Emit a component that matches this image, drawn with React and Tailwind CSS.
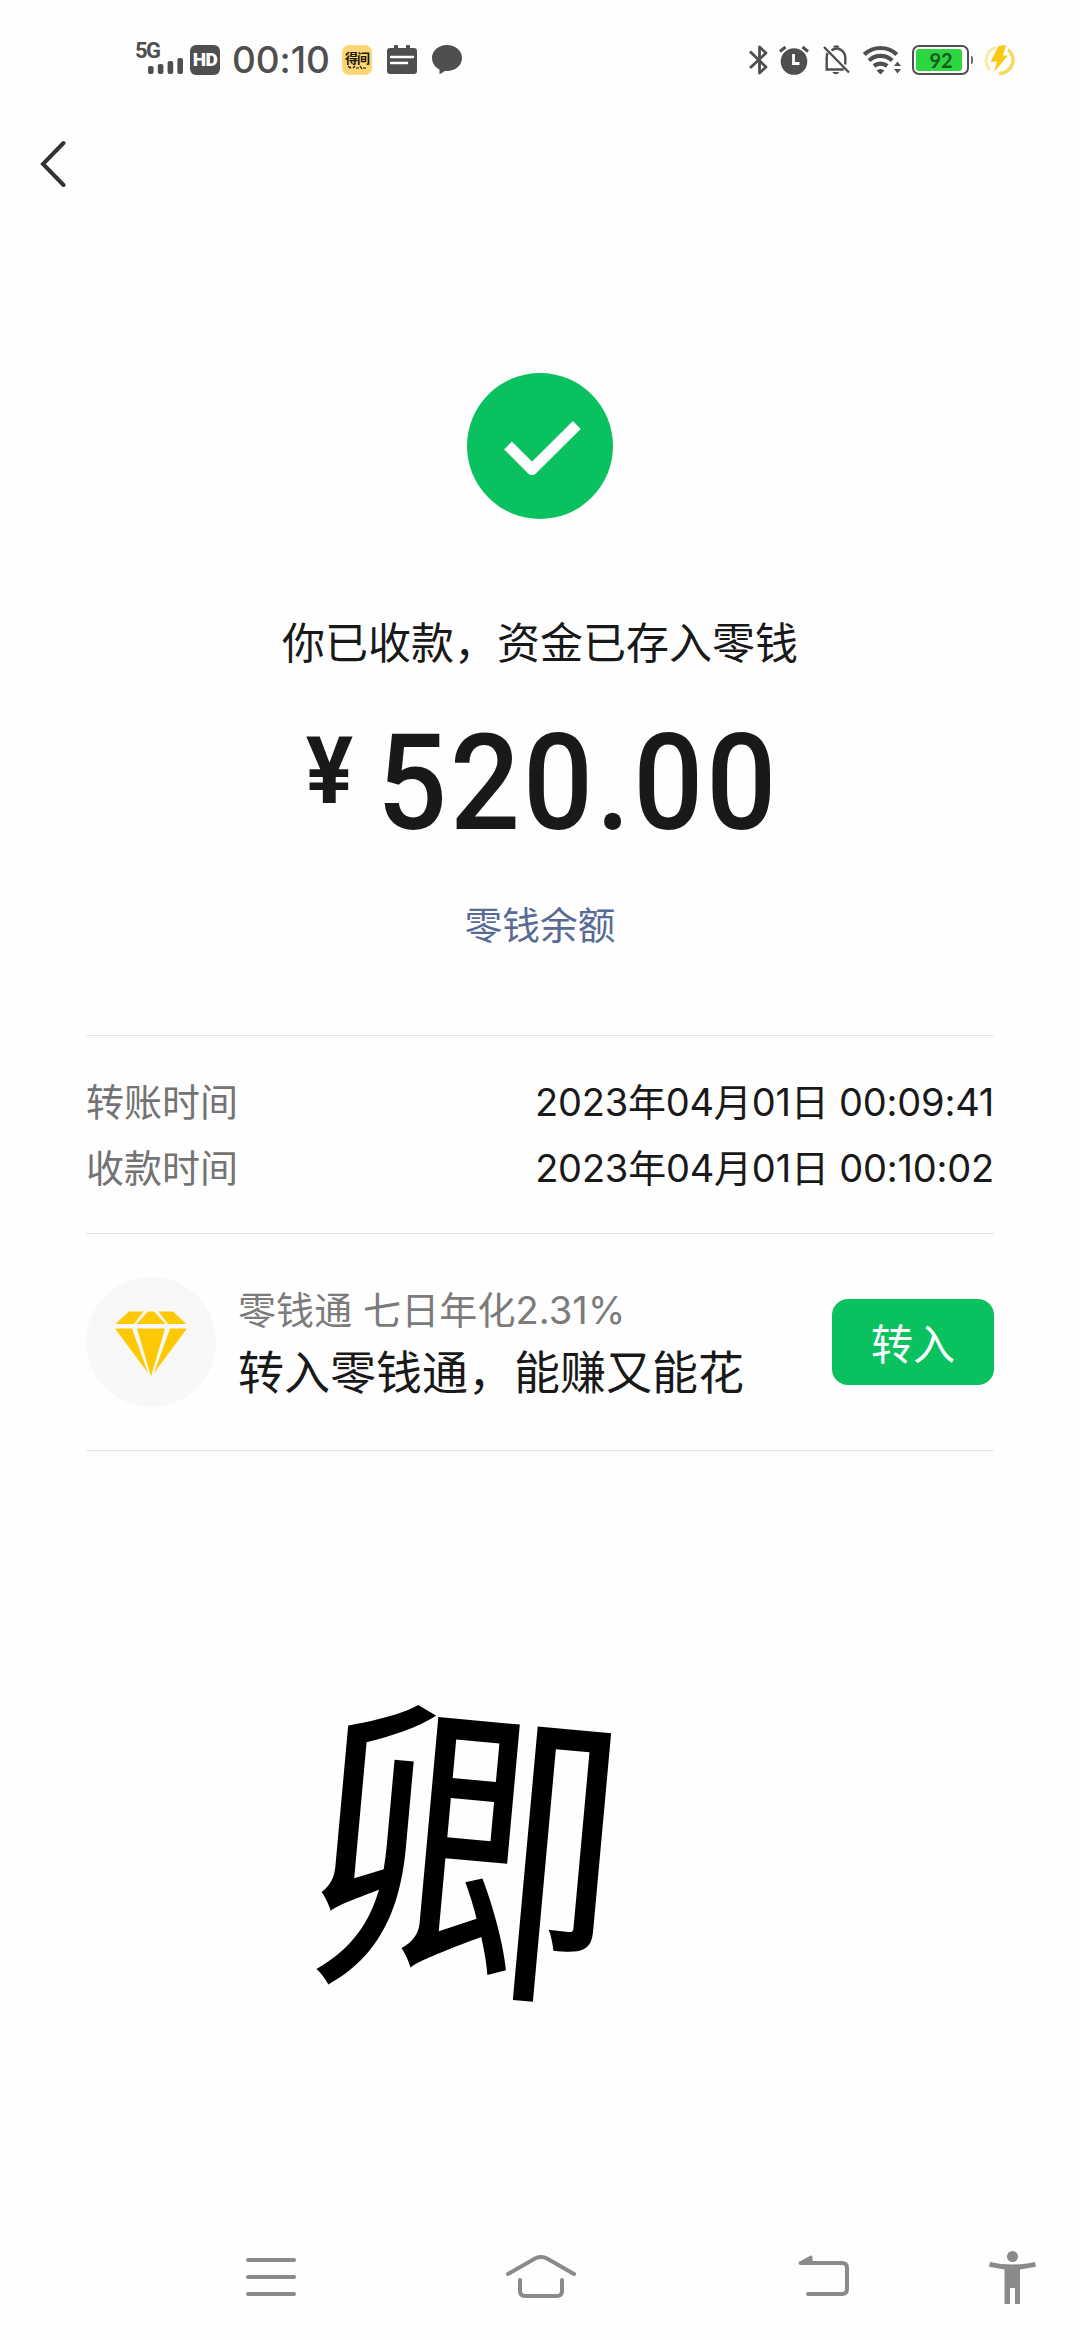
// src/App.jsx

const times = [
  { label: '转账时间', value: '2023年04月01日 00:09:41' },
  { label: '收款时间', value: '2023年04月01日 00:10:02' },
];

function StatusBar() {
  return (
    <header className="flex h-[120px] items-start justify-between pt-[43px] pl-[135px] pr-[65px] text-[#4f4f4f]">
      <div className="flex items-start">
        <div className="flex h-8 w-[49px] flex-col">
          <span className="font-['Roboto',sans-serif] text-[22px] leading-[15px] font-bold tracking-[-1.5px]">5G</span>
          <svg className="-mt-0.5 ml-[13px]" width="36" height="18" viewBox="0 0 36 18" fill="currentColor">
            <rect x="0" y="10" width="5.600" height="8" rx="2" />
            <rect x="9.800" y="8" width="5.600" height="10" rx="2" />
            <rect x="19.600" y="5" width="5.600" height="13" rx="2" />
            <rect x="29.400" y="2" width="5.600" height="16" rx="2" />
          </svg>
        </div>
        <div className="mt-0.5 ml-1.5 flex h-[30px] w-[30px] items-center justify-center rounded-[6px] bg-[#4f4f4f] font-['Roboto',sans-serif] text-[19px] font-black tracking-[-0.5px] text-white">
          <span>HD</span>
        </div>
        <span className="ml-3 w-[97px] font-['Inter',sans-serif] text-[37px] leading-[34px] font-[450] tracking-[-0.1px]">00:10</span>
        <div className="mt-0.5 ml-[13px] flex h-[30px] w-[30px] flex-col items-center rounded-[7px] bg-[#fbd576] pt-[5px] font-['Noto_Sans_CJK_SC',sans-serif] text-[#1b1508]">
          <span className="text-[13px] leading-[15px] font-bold tracking-[-1px]">得间</span>
          <svg width="19" height="5" viewBox="0 0 19 5" fill="none" stroke="currentColor" strokeWidth="1.2">
            <path d="M0 1l2 2 1-1M5 3l2-2M8 3h3M12 1l2 3M15 3h3" />
          </svg>
        </div>
        <svg className="mt-0.5 ml-[15px]" width="30" height="30" viewBox="0 0 30 30">
          <path d="M7 3V1.5a2 2 0 0 1 4 0V3h8V1.5a2 2 0 0 1 4 0V3h4a3 3 0 0 1 3 3v20a3 3 0 0 1-3 3H3a3 3 0 0 1-3-3V6a3 3 0 0 1 3-3z" fill="currentColor" />
          <path d="M4 12h22M4 18h16" stroke="#fff" strokeWidth="2.4" strokeLinecap="round" />
        </svg>
        <svg className="mt-0.5 ml-[15px]" width="30" height="30" viewBox="0 0 30 30">
          <path d="M15 0C6.500 0 0 5.600 0 13c0 5 3 9.200 7.500 11.400v4.800c2-1 3.600-1.900 5.200-3.200 9.800.8 17.300-5 17.300-13C30 5.600 23.500 0 15 0z" fill="currentColor" />
        </svg>
      </div>

      <div className="mt-0.5 flex items-start">
        <svg width="19" height="30" viewBox="0 0 19 30" fill="none" stroke="currentColor" strokeWidth="2.8" strokeLinejoin="round">
          <path d="M1 6.500L17 22l-6.500 6V2L17 8 1 23" />
        </svg>
        <svg className="ml-[11px]" width="30" height="30" viewBox="0 0 30 30">
          <circle cx="15" cy="16.500" r="13.300" fill="currentColor" />
          <path d="M1 6.500L6.500 2M29 6.500L23.500 2" stroke="currentColor" strokeWidth="3" />
          <path d="M14.500 9v9.500h6" fill="none" stroke="#fff" strokeWidth="2.8" />
        </svg>
        <svg className="ml-3.5" width="27" height="30" viewBox="0 0 27 30" fill="none" stroke="currentColor" strokeWidth="2.4">
          <path d="M1 2l25 25.500M4.500 8C3.800 9.800 3.700 11 3.700 13v11.500h17" />
          <path d="M8.500 5.500C14 1 22.300 5 22.300 13v6.500" />
          <path d="M10.300 2.500a3 2.300 0 0 1 6 0z" fill="currentColor" stroke="none" />
          <path d="M9.500 27h6.500c-.8 3-5.700 3-6.500 0z" fill="currentColor" stroke="none" />
        </svg>
        <svg className="ml-[13px]" width="38" height="30" viewBox="0 0 38 30">
          <g fill="none" stroke="currentColor" strokeWidth="4.200">
            <path d="M1.300 9.500a23.500 23.500 0 0 1 32.500 0" />
            <path d="M6 15.500a17 17 0 0 1 23.200 0" />
            <path d="M11 21a10.500 10.500 0 0 1 13.200 0" />
          </g>
          <path d="M13.500 25.500a6 6 0 0 1 8 0L17.500 29.500z" fill="currentColor" />
          <path d="M31 21l3.500-4.500L38 21zM31 24l3.500 4.500L38 24z" fill="currentColor" />
        </svg>
        <div className="ml-[11px] flex h-[30px] w-[57px] rounded-[7px] border-[2.5px] border-[#4f4f4f] p-0.5">
          <div className="flex h-full w-[46px] items-center justify-center rounded-[3px] bg-[#2bd641] pl-1 font-['Lato',sans-serif] text-[20px] leading-none font-bold text-[#14591c]">
            <span>92</span>
          </div>
        </div>
        <div className="mt-[11px] ml-0.5 h-2 w-[2px] rounded-r bg-[#6a6a6a]" />
        <svg className="ml-[11px]" width="31" height="31" viewBox="0 0 31 31">
          <path d="M12 2.500A13.500 13.500 0 0 0 6 25" fill="none" stroke="#fbe9a8" strokeWidth="3" />
          <path d="M24 4.500A13.500 13.500 0 0 1 15 28.500" fill="none" stroke="#f6d95f" strokeWidth="3.500" />
          <path d="M14.500 1L22 0l-3 10.500h5L10 27l3-10.500-6.500.5z" fill="#fac913" />
        </svg>
      </div>
    </header>
  );
}

function Diamond() {
  return (
    <svg width="72" height="66" viewBox="0 0 72 66" fill="#fec903">
      <path d="M14 .5h14.500L19 13H.5zM33 .5h6L50.500 13h-29zM43.500 .5H58L71.500 13H53z" />
      <path d="M0 17.500h17L33 62zM22 17.500h28L36 65.500zM55 17.500h17L39 62z" />
    </svg>
  );
}

function NavBar() {
  return (
    <nav className="flex h-[110px] items-start pt-[21px] pl-[246px] text-[#8a8a8a]">
      <svg className="mt-[7px]" width="50" height="38" viewBox="0 0 50 38" fill="none" stroke="currentColor" strokeWidth="4" strokeLinecap="round">
        <path d="M2 2h46M2 19h46M2 36h46" />
      </svg>
      <svg className="mt-1 ml-[210px]" width="70" height="44" viewBox="0 0 70 44" fill="none" stroke="currentColor" strokeWidth="4" strokeLinecap="round">
        <path d="M2 19L29 3.500q6-3 12 0L68 19" />
        <path d="M14 25v11q0 5 5 5h32q5 0 5-5V25" />
      </svg>
      <svg className="mt-1 ml-[222px]" width="52" height="44" viewBox="0 0 52 44" fill="none" stroke="currentColor" strokeWidth="4" strokeLinecap="round">
        <path d="M3 8h41q5 0 5 5v21q0 5-5 5H10" />
        <path d="M2 8L13 2v6z" fill="currentColor" strokeWidth="3" strokeLinejoin="round" />
      </svg>
      <svg className="ml-[139px]" width="47" height="54" viewBox="0 0 47 54" fill="currentColor">
        <circle cx="23.500" cy="5.500" r="5.500" />
        <path d="M1 11Q23.500 16 46 11l1 4.800-16 2.700V53h-5V37h-5v16h-5.500V18.500L0 15.800z" />
      </svg>
    </nav>
  );
}

function App() {
  return (
    <div className="flex h-[2340px] w-[1080px] flex-col overflow-hidden bg-[#fefefe] font-['Noto_Sans_CJK_SC',sans-serif] text-[#191919]">
      <StatusBar />

      <div className="h-[253px] pt-5 pl-10">
        <svg width="26" height="48" viewBox="0 0 26 48" fill="none" stroke="#333" strokeWidth="4" strokeLinecap="round">
          <path d="M23.500 3L3 24l20.500 21" />
        </svg>
      </div>

      {/* Result */}
      <section className="flex h-[662px] flex-col items-center">
        <svg width="146" height="146" viewBox="0 0 146 146">
          <circle cx="73" cy="73" r="73" fill="#0ac160" />
          <path d="M41 72.500l24 24L109.800 52" fill="none" stroke="#fff" strokeWidth="11" strokeLinejoin="round" />
        </svg>
        <p className="mt-[89px] text-[43px] leading-[64px] whitespace-nowrap">你已收款，资金已存入零钱</p>
        <div className="mt-[45px] flex h-[134px] items-start pl-0.5 font-['Roboto',sans-serif] font-medium">
          <span className="mt-[9px] mr-5 w-[55px] origin-center scale-x-[0.96] text-center text-[92px] leading-[92px] font-bold">¥</span>
          <span className="w-[404px] origin-left scale-x-[0.92] text-[134px] leading-[134px] tracking-[3.2px]">520.00</span>
        </div>
        <a className="mt-[44px] text-[37.700px] leading-[56px] text-[#576b95]">零钱余额</a>
      </section>

      {/* Details */}
      <section className="mx-[86px] flex h-[198px] flex-col border-t border-[#e4e4e4] pt-[34px]">
        {times.map((item) => (
          <div key={item.label} className="flex h-[66px] items-center justify-between text-[38px] whitespace-nowrap">
            <span className="pb-2 text-[#737373]">{item.label}</span>
            <span className="pb-0.5 font-['Inter','Noto_Sans_CJK_SC',sans-serif] tracking-[-0.2px]">{item.value}</span>
          </div>
        ))}
      </section>

      <section className="mx-[86px] flex h-[218px] items-start border-y border-[#e4e4e4] pt-[43px]">
        <div className="flex h-[130px] w-[130px] items-center justify-center rounded-full bg-[#f8f8f8] pt-1">
          <Diamond />
        </div>
        <div className="ml-[22px] flex flex-1 flex-col whitespace-nowrap">
          <span className="mt-[5px] font-['Inter','Noto_Sans_CJK_SC',sans-serif] text-[38px] leading-[57px] tracking-[0.1px] text-[#7b7b7b]">零钱通 七日年化2.31%</span>
          <span className="-mt-px text-[46px] leading-[62px]">转入零钱通，能赚又能花</span>
        </div>
        <button type="button" className="mt-[22px] h-[86px] w-[162px] rounded-[16px] bg-[#0ac160] text-[42px] leading-[86px] text-white">
          转入
        </button>
      </section>

      <div className="flex flex-1 items-start pt-[226px] pl-[313px]">
        <span className="block h-[310px] w-[310px] scale-y-[1.025] rotate-[5.2deg] text-[310px] leading-[310px] text-black">卿</span>
      </div>

      <NavBar />
    </div>
  );
}

export default App;
